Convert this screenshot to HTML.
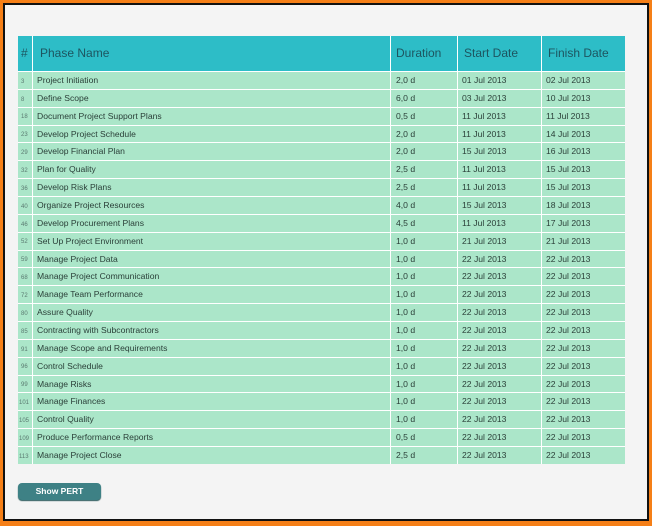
<!DOCTYPE html>
<html><head><style>
html,body{margin:0;padding:0;}
body{width:652px;height:526px;background:#f57f17;position:relative;overflow:hidden;font-family:"Liberation Sans",sans-serif;}
.blk{position:absolute;left:3px;top:3px;right:3px;bottom:5px;background:#111;}
.pg{position:absolute;left:5px;top:5px;right:5px;bottom:7px;background:#f4f4f4;}
.tbl{position:absolute;left:18px;top:36px;width:607px;}
.hd{display:flex;height:35px;line-height:35px;background:#2dbdc7;border-bottom:1px solid #fff;color:#1d5560;font-size:12px;}
.r{display:flex;height:16.86px;line-height:16.86px;background:#abe6c9;border-bottom:1px solid #fff;color:#2a3f38;font-size:8.6px;}
.c{box-sizing:border-box;border-right:1px solid #fff;display:block;white-space:nowrap;overflow:hidden;}
.c:last-child{border-right:none;}
.a{width:15px;padding-left:3px;}
.a span{font-size:6px;color:#5a7a70;display:inline-block;transform:translateY(1px);line-height:6px;vertical-align:middle;}
.b{width:358px;padding-left:4px;}
.d{width:67px;padding-left:5px;}
.e{width:84px;padding-left:4px;}
.f{width:83px;padding-left:4px;}
.hd .a{font-size:12px;color:#1d5560;padding-left:3px}
.hd .b{padding-left:7px}
.hd .e,.hd .f{padding-left:6px}
.btn{position:absolute;left:18px;top:483px;width:83px;height:17px;background:#3e8185;border-radius:4px;color:#fff;font-size:8.5px;font-weight:bold;text-align:center;line-height:17px;box-shadow:0 1px 1px #2a5a5c;}
</style></head><body>
<div class="blk"></div><div class="pg"></div>
<div class="tbl">
<div class="hd"><div class="c a">#</div><div class="c b">Phase Name</div><div class="c d">Duration</div><div class="c e">Start Date</div><div class="c f">Finish Date</div></div>
<div class="r"><div class="c a"><span>3</span></div><div class="c b">Project Initiation</div><div class="c d">2,0 d</div><div class="c e">01 Jul 2013</div><div class="c f">02 Jul 2013</div></div>
<div class="r"><div class="c a"><span>8</span></div><div class="c b">Define Scope</div><div class="c d">6,0 d</div><div class="c e">03 Jul 2013</div><div class="c f">10 Jul 2013</div></div>
<div class="r"><div class="c a"><span>18</span></div><div class="c b">Document Project Support Plans</div><div class="c d">0,5 d</div><div class="c e">11 Jul 2013</div><div class="c f">11 Jul 2013</div></div>
<div class="r"><div class="c a"><span>23</span></div><div class="c b">Develop Project Schedule</div><div class="c d">2,0 d</div><div class="c e">11 Jul 2013</div><div class="c f">14 Jul 2013</div></div>
<div class="r"><div class="c a"><span>29</span></div><div class="c b">Develop Financial Plan</div><div class="c d">2,0 d</div><div class="c e">15 Jul 2013</div><div class="c f">16 Jul 2013</div></div>
<div class="r"><div class="c a"><span>32</span></div><div class="c b">Plan for Quality</div><div class="c d">2,5 d</div><div class="c e">11 Jul 2013</div><div class="c f">15 Jul 2013</div></div>
<div class="r"><div class="c a"><span>36</span></div><div class="c b">Develop Risk Plans</div><div class="c d">2,5 d</div><div class="c e">11 Jul 2013</div><div class="c f">15 Jul 2013</div></div>
<div class="r"><div class="c a"><span>40</span></div><div class="c b">Organize Project Resources</div><div class="c d">4,0 d</div><div class="c e">15 Jul 2013</div><div class="c f">18 Jul 2013</div></div>
<div class="r"><div class="c a"><span>46</span></div><div class="c b">Develop Procurement Plans</div><div class="c d">4,5 d</div><div class="c e">11 Jul 2013</div><div class="c f">17 Jul 2013</div></div>
<div class="r"><div class="c a"><span>52</span></div><div class="c b">Set Up Project Environment</div><div class="c d">1,0 d</div><div class="c e">21 Jul 2013</div><div class="c f">21 Jul 2013</div></div>
<div class="r"><div class="c a"><span>59</span></div><div class="c b">Manage Project Data</div><div class="c d">1,0 d</div><div class="c e">22 Jul 2013</div><div class="c f">22 Jul 2013</div></div>
<div class="r"><div class="c a"><span>68</span></div><div class="c b">Manage Project Communication</div><div class="c d">1,0 d</div><div class="c e">22 Jul 2013</div><div class="c f">22 Jul 2013</div></div>
<div class="r"><div class="c a"><span>72</span></div><div class="c b">Manage Team Performance</div><div class="c d">1,0 d</div><div class="c e">22 Jul 2013</div><div class="c f">22 Jul 2013</div></div>
<div class="r"><div class="c a"><span>80</span></div><div class="c b">Assure Quality</div><div class="c d">1,0 d</div><div class="c e">22 Jul 2013</div><div class="c f">22 Jul 2013</div></div>
<div class="r"><div class="c a"><span>85</span></div><div class="c b">Contracting with Subcontractors</div><div class="c d">1,0 d</div><div class="c e">22 Jul 2013</div><div class="c f">22 Jul 2013</div></div>
<div class="r"><div class="c a"><span>91</span></div><div class="c b">Manage Scope and Requirements</div><div class="c d">1,0 d</div><div class="c e">22 Jul 2013</div><div class="c f">22 Jul 2013</div></div>
<div class="r"><div class="c a"><span>96</span></div><div class="c b">Control Schedule</div><div class="c d">1,0 d</div><div class="c e">22 Jul 2013</div><div class="c f">22 Jul 2013</div></div>
<div class="r"><div class="c a"><span>99</span></div><div class="c b">Manage Risks</div><div class="c d">1,0 d</div><div class="c e">22 Jul 2013</div><div class="c f">22 Jul 2013</div></div>
<div class="r"><div class="c a" style="padding-left:1px"><span>101</span></div><div class="c b">Manage Finances</div><div class="c d">1,0 d</div><div class="c e">22 Jul 2013</div><div class="c f">22 Jul 2013</div></div>
<div class="r"><div class="c a" style="padding-left:1px"><span>105</span></div><div class="c b">Control Quality</div><div class="c d">1,0 d</div><div class="c e">22 Jul 2013</div><div class="c f">22 Jul 2013</div></div>
<div class="r"><div class="c a" style="padding-left:1px"><span>109</span></div><div class="c b">Produce Performance Reports</div><div class="c d">0,5 d</div><div class="c e">22 Jul 2013</div><div class="c f">22 Jul 2013</div></div>
<div class="r" style="border-bottom:none"><div class="c a" style="padding-left:1px"><span>113</span></div><div class="c b">Manage Project Close</div><div class="c d">2,5 d</div><div class="c e">22 Jul 2013</div><div class="c f">22 Jul 2013</div></div>
</div>
<div class="btn">Show PERT</div>
</body></html>
